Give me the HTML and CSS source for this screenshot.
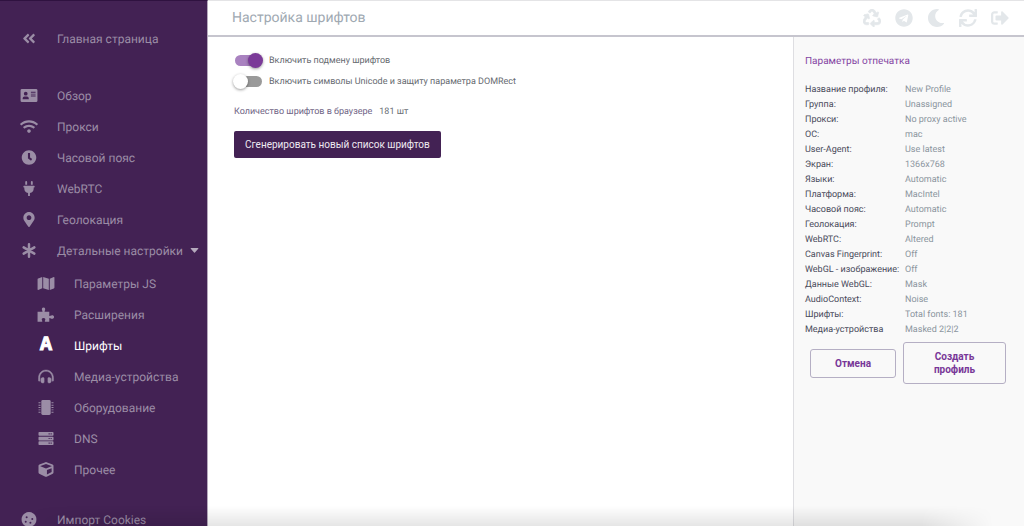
FILE: index.html
```html
<!DOCTYPE html>
<html lang="ru">
<head>
    <meta charset="UTF-8">
    <meta name="viewport" content="width=device-width, initial-scale=1.0">
    <title>Настройка шрифтов</title>
    <link rel="stylesheet" href="styles.css">
</head>
<body>
    <nav class="sidebar">
        <a class="nav-item home" href="#">
            <svg class="icon" viewBox="0 0 448 512"><path d="M223.7 239l136-136c9.4-9.4 24.6-9.4 33.9 0l22.6 22.6c9.4 9.4 9.4 24.6 0 33.9L319.9 256l96.4 96.4c9.4 9.4 9.4 24.6 0 33.9L393.7 409c-9.4 9.4-24.6 9.4-33.9 0l-136-136c-9.5-9.4-9.5-24.6-.1-34zm-192 34l136 136c9.4 9.4 24.6 9.4 33.9 0l22.6-22.6c9.4-9.4 9.4-24.6 0-33.9L127.9 256l96.4-96.4c9.4-9.4 9.4-24.6 0-33.9L201.7 103c-9.4-9.4-24.6-9.4-33.9 0l-136 136c-9.5 9.4-9.5 24.6-.1 34z"/></svg>
            <span>Главная страница</span>
        </a>
        <a class="nav-item" href="#">
            <svg class="icon" viewBox="0 0 576 512"><path fill-rule="evenodd" d="M48 32h480a48 48 0 0 1 48 48v352a48 48 0 0 1-48 48H48a48 48 0 0 1-48-48V80a48 48 0 0 1 48-48zM176 128a64 64 0 1 0 0 128 64 64 0 1 0 0-128zM72 384h208v-28c0-44-30-68-60-68h-88c-30 0-60 24-60 68zM352 128v32h160v-32zM352 192v32h160v-32zM352 256v32h160v-32z"/></svg>
            <span>Обзор</span>
        </a>
        <a class="nav-item" href="#">
            <svg class="icon" viewBox="0 0 640 512"><path d="M634.91 154.88C457.74-8.99 182.19-8.93 5.09 154.88c-6.66 6.16-6.79 16.59-.35 22.98l34.24 33.97c6.14 6.1 16.02 6.23 22.4.38 145.92-133.68 371.3-133.71 517.25 0 6.38 5.85 16.26 5.71 22.4-.38l34.24-33.97c6.43-6.39 6.3-16.82-.36-22.98zM320 352c-35.35 0-64 28.65-64 64s28.65 64 64 64 64-28.65 64-64-28.65-64-64-64zm202.67-83.59c-115.26-101.93-290.21-101.82-405.34 0-6.9 6.1-7.12 16.69-.57 23.15l34.44 33.99c6 5.92 15.66 6.32 22.05.8 83.95-72.57 209.74-72.41 293.49 0 6.39 5.52 16.05 5.13 22.05-.8l34.44-33.99c6.56-6.46 6.33-17.06-.56-23.15z"/></svg>
            <span>Прокси</span>
        </a>
        <a class="nav-item" href="#">
            <svg class="icon" viewBox="0 0 512 512"><path d="M256 8C119 8 8 119 8 256s111 248 248 248 248-111 248-248S393 8 256 8zm57.1 350.1L224.9 294c-3.1-2.3-4.9-5.9-4.9-9.7V116c0-6.6 5.4-12 12-12h48c6.6 0 12 5.4 12 12v137.7l63.5 46.2c5.4 3.9 6.5 11.4 2.6 16.8l-28.2 38.8c-3.9 5.3-11.4 6.5-16.8 2.6z"/></svg>
            <span>Часовой пояс</span>
        </a>
        <a class="nav-item" href="#">
            <svg class="icon" viewBox="0 0 384 512"><path d="M320,32a32,32,0,0,0-64,0v96h64Zm48,128H16A16,16,0,0,0,0,176v32a16,16,0,0,0,16,16H32v32A160.07,160.07,0,0,0,160,412.8V512h64V412.8A160.07,160.07,0,0,0,352,256V224h16a16,16,0,0,0,16-16V176A16,16,0,0,0,368,160ZM128,32a32,32,0,0,0-64,0v96h64Z"/></svg>
            <span>WebRTC</span>
        </a>
        <a class="nav-item" href="#">
            <svg class="icon" viewBox="0 0 384 512"><path d="M172.268 501.67C26.97 291.031 0 269.413 0 192 0 85.961 85.961 0 192 0s192 85.961 192 192c0 77.413-26.97 99.031-172.268 309.67-9.535 13.774-29.93 13.773-39.464 0zM192 272c44.183 0 80-35.817 80-80s-35.817-80-80-80-80 35.817-80 80 35.817 80 80 80z"/></svg>
            <span>Геолокация</span>
        </a>
        <a class="nav-item" href="#">
            <svg class="icon" viewBox="0 0 512 512"><path d="M256 44v424M74 150l364 212M74 362l364-212" fill="none" stroke="currentColor" stroke-width="84" stroke-linecap="round"/></svg>
            <span>Детальные настройки</span>
            <svg class="caret" viewBox="0 0 10 6"><path d="M1 0h8q1 0 .5 1L5.5 5.5q-.5.5-1 0L.5 1Q0 0 1 0z"/></svg>
        </a>
        <div class="submenu">
            <a class="nav-item" href="#">
                <svg class="icon" viewBox="0 0 576 512"><path d="M0 117.66v346.32c0 11.32 11.43 19.06 21.94 14.86L160 416V32L20.12 87.95A32.006 32.006 0 0 0 0 117.66zM192 416l192 64V96L192 32v384zM554.06 33.16L416 96v384l139.88-55.95A31.996 31.996 0 0 0 576 394.34V48.02c0-11.32-11.43-19.06-21.94-14.86z"/></svg>
                <span>Параметры JS</span>
            </a>
            <a class="nav-item" href="#">
                <svg class="icon" viewBox="0 0 576 512"><path d="M0 160h150c20 0 24-14 12-34-30-46-14-110 42-110s72 64 42 110c-12 20-8 34 12 34h142v128c0 22 14 26 36 10 56-36 128-18 128 42s-72 78-128 42c-22-16-36-12-36 10v112H262c-18 0-24-14-12-32 34-50 10-94-46-94s-80 44-46 94c12 18 6 32-12 32H0z"/></svg>
                <span>Расширения</span>
            </a>
            <a class="nav-item active" href="#">
                <span class="icon letter" aria-hidden="true">A</span>
                <span>Шрифты</span>
            </a>
            <a class="nav-item" href="#">
                <svg class="icon" viewBox="0 0 512 512"><path d="M160 288h-16c-35.35 0-64 28.7-64 64.12v63.76c0 35.41 28.65 64.12 64 64.12h16c17.67 0 32-14.36 32-32.06V320.06c0-17.71-14.33-32.06-32-32.06zm208 0h-16c-17.67 0-32 14.35-32 32.06v127.88c0 17.7 14.33 32.06 32 32.06h16c35.35 0 64-28.71 64-64.12v-63.76c0-35.41-28.65-64.12-64-64.12zM256 32C112.91 32 4.57 151.13 0 288v112c0 8.84 7.16 16 16 16h16c8.84 0 16-7.16 16-16V288c0-114.67 93.33-207.8 208-207.82 114.67.02 208 93.15 208 207.82v112c0 8.84 7.16 16 16 16h16c8.84 0 16-7.16 16-16V288C507.43 151.13 399.09 32 256 32z" stroke="currentColor" stroke-width="14"/></svg>
                <span>Медиа-устройства</span>
            </a>
            <a class="nav-item" href="#">
                <svg class="icon" viewBox="0 0 512 512"><rect x="96" width="320" height="512" rx="48"/><path d="M0 80h70v32H0zM0 160h70v32H0zM0 240h70v32H0zM0 320h70v32H0zM0 400h70v32H0zM442 80h70v32h-70zM442 160h70v32h-70zM442 240h70v32h-70zM442 320h70v32h-70zM442 400h70v32h-70z"/></svg>
                <span>Оборудование</span>
            </a>
            <a class="nav-item" href="#">
                <svg class="icon" viewBox="0 0 512 512"><path fill-rule="evenodd" d="M24 32h464a24 24 0 0 1 24 24v80a24 24 0 0 1-24 24H24a24 24 0 0 1-24-24V56a24 24 0 0 1 24-24zM24 192h464a24 24 0 0 1 24 24v80a24 24 0 0 1-24 24H24a24 24 0 0 1-24-24v-80a24 24 0 0 1 24-24zM24 352h464a24 24 0 0 1 24 24v80a24 24 0 0 1-24 24H24a24 24 0 0 1-24-24v-80a24 24 0 0 1 24-24zM344 76v40h40V76zM412 76v40h40V76zM344 236v40h40v-40zM412 236v40h40v-40zM344 396v40h40v-40zM412 396v40h40v-40z"/></svg>
                <span>DNS</span>
            </a>
            <a class="nav-item" href="#">
                <svg class="icon" viewBox="0 0 512 512"><path d="M239.1 6.3l-208 78c-18.7 7-31.1 25-31.1 45v225.1c0 18.2 10.3 34.8 26.5 42.9l208 104c13.5 6.8 29.4 6.8 42.9 0l208-104c16.3-8.1 26.5-24.8 26.5-42.9V129.3c0-20-12.4-37.9-31.1-44.9l-208-78C262 2.2 250 2.2 239.1 6.3zM256 68.4l192 72v1.1l-192 78-192-78v-1.1l192-72zm32 356V275.5l160-65v133.9l-160 80z"/></svg>
                <span>Прочее</span>
            </a>
        </div>
        <a class="nav-item import" href="#">
            <svg class="icon" viewBox="0 0 512 512"><path fill-rule="evenodd" d="M180 12 Q256-12 332 12L430 66Q480 110 500 180Q516 256 500 332Q480 400 430 446L332 500Q256 520 180 500L82 446Q32 400 12 332Q-6 256 12 180Q32 110 82 66zM176 144a34 34 0 1 0 0 68 34 34 0 1 0 0-68zM144 302a34 34 0 1 0 0 68 34 34 0 1 0 0-68zM304 334a34 34 0 1 0 0 68 34 34 0 1 0 0-68zM368 206a34 34 0 1 0 0 68 34 34 0 1 0 0-68z"/></svg>
            <span>Импорт Cookies</span>
        </a>
    </nav>

    <div class="page">
        <header class="topbar">
            <h1>Настройка шрифтов</h1>
            <div class="actions">
                <button type="button" aria-label="Корзина">
                    <svg viewBox="0 0 512 512"><path stroke="#e3e7ea" stroke-width="20" d="M184.561 261.903c3.232 13.997-12.123 24.635-24.068 17.168l-40.736-25.455-50.867 81.402C55.606 356.273 70.96 384 96.012 384H148c6.627 0 12 5.373 12 12v40c0 6.627-5.373 12-12 12H96.115c-75.334 0-121.302-83.048-81.408-146.88l50.822-81.388-40.725-25.448c-12.081-7.547-8.966-25.961 4.879-29.158l110.237-25.45c8.611-1.988 17.201 3.381 19.189 11.99l25.452 110.237zm98.561-182.915l41.289 66.076-40.74 25.457c-12.051 7.528-9 25.953 4.879 29.158l110.237 25.45c8.672 1.999 17.215-3.438 19.189-11.99l25.45-110.237c3.197-13.844-11.99-24.719-24.068-17.168l-40.687 25.424-41.263-66.082c-37.521-60.033-125.209-60.171-162.816 0l-17.963 28.766c-3.51 5.62-1.8 13.021 3.82 16.533l33.919 21.195c5.62 3.512 13.024 1.803 16.536-3.817l17.961-28.743c12.712-20.341 41.973-19.676 54.257-.022zM497.288 301.12l-27.515-44.065c-3.511-5.623-10.916-7.334-16.538-3.821l-33.861 21.159c-5.62 3.512-7.33 10.915-3.818 16.536l27.564 44.112c13.257 21.211-2.057 48.96-27.136 48.96H320V336.02c0-14.213-17.242-21.383-27.313-11.313l-80 79.981c-6.249 6.248-6.249 16.379 0 22.627l80 79.989C302.689 517.308 320 510.3 320 495.989V448h95.88c75.274 0 121.335-82.997 81.408-146.88z"/></svg>
                </button>
                <button type="button" aria-label="Telegram">
                    <svg viewBox="0 0 496 512"><path d="M248 8C111 8 0 119 0 256s111 248 248 248 248-111 248-248S385 8 248 8zm121.8 169.9l-40.7 191.8c-3 13.6-11.1 16.9-22.4 10.5l-62-45.7-29.9 28.8c-3.3 3.3-6.1 6.1-12.5 6.1l4.4-63.1 114.9-103.8c5-4.4-1.1-6.9-7.7-2.5l-142 89.4-61.2-19.1c-13.3-4.2-13.6-13.3 2.8-19.7l239.1-92.2c11.1-4 20.8 2.7 17.2 19.5z"/></svg>
                </button>
                <button type="button" aria-label="Тёмная тема">
                    <svg viewBox="0 0 512 512"><path d="M283.211 512c78.962 0 151.079-35.925 198.857-94.792 7.068-8.708-.639-21.43-11.562-19.35-124.203 23.654-238.262-71.576-238.262-196.954 0-72.222 38.662-138.635 101.498-174.394 9.686-5.512 7.25-20.197-3.756-22.23A258.156 258.156 0 0 0 283.211 0c-141.309 0-256 114.511-256 256 0 141.309 114.511 256 256 256z"/></svg>
                </button>
                <button type="button" aria-label="Обновить">
                    <svg viewBox="0 0 512 512"><path d="M440.65 12.57l4 82.77A247.16 247.16 0 0 0 255.83 8C134.73 8 33.91 94.92 12.29 209.82A12 12 0 0 0 24.09 224h49.05a12 12 0 0 0 11.67-9.26 175.91 175.91 0 0 1 317-56.94l-101.46-4.86a12 12 0 0 0-12.57 12v47.41a12 12 0 0 0 12 12H500a12 12 0 0 0 12-12V12a12 12 0 0 0-12-12h-47.37a12 12 0 0 0-11.98 12.57zM255.83 432a175.61 175.61 0 0 1-146-77.8l101.8 4.87a12 12 0 0 0 12.57-12v-47.4a12 12 0 0 0-12-12H12a12 12 0 0 0-12 12V500a12 12 0 0 0 12 12h47.35a12 12 0 0 0 12-12.6l-4.15-82.57A247.17 247.17 0 0 0 255.83 504c121.11 0 221.93-86.92 243.55-201.82a12 12 0 0 0-11.8-14.18h-49.05a12 12 0 0 0-11.67 9.26A175.86 175.86 0 0 1 255.83 432z"/></svg>
                </button>
                <button type="button" aria-label="Выход">
                    <svg viewBox="0 0 512 512"><path d="M497 273L329 441c-15 15-41 4.5-41-17v-96H152c-13.3 0-24-10.7-24-24v-96c0-13.3 10.7-24 24-24h136V88c0-21.4 25.9-32 41-17l168 168c9.3 9.4 9.3 24.6 0 34zM192 436v-40c0-6.6-5.4-12-12-12H96c-17.7 0-32-14.3-32-32V160c0-17.7 14.3-32 32-32h84c6.6 0 12-5.4 12-12V76c0-6.6-5.4-12-12-12H96c-53 0-96 43-96 96v192c0 53 43 96 96 96h84c6.6 0 12-5.4 12-12z"/></svg>
                </button>
            </div>
        </header>

        <div class="content">
            <main class="settings">
                <label class="switch">
                    <input type="checkbox" checked>
                    <span>Включить подмену шрифтов</span>
                </label>
                <label class="switch">
                    <input type="checkbox">
                    <span>Включить символы Unicode и защиту параметра DOMRect</span>
                </label>
                <p class="count"><span>Количество шрифтов в браузере</span><span class="value">181 шт</span></p>
                <button class="generate" type="button">Сгенерировать новый список шрифтов</button>
            </main>

            <aside class="summary">
                <h2>Параметры отпечатка</h2>
                <table>
                    <tr><th scope="row">Название профиля:</th><td>New Profile</td></tr>
                    <tr><th scope="row">Группа:</th><td>Unassigned</td></tr>
                    <tr><th scope="row">Прокси:</th><td>No proxy active</td></tr>
                    <tr><th scope="row">ОС:</th><td>mac</td></tr>
                    <tr><th scope="row">User-Agent:</th><td>Use latest</td></tr>
                    <tr><th scope="row">Экран:</th><td>1366x768</td></tr>
                    <tr><th scope="row">Языки:</th><td>Automatic</td></tr>
                    <tr><th scope="row">Платформа:</th><td>MacIntel</td></tr>
                    <tr><th scope="row">Часовой пояс:</th><td>Automatic</td></tr>
                    <tr><th scope="row">Геолокация:</th><td>Prompt</td></tr>
                    <tr><th scope="row">WebRTC:</th><td>Altered</td></tr>
                    <tr><th scope="row">Canvas Fingerprint:</th><td>Off</td></tr>
                    <tr><th scope="row">WebGL - изображение:</th><td>Off</td></tr>
                    <tr><th scope="row">Данные WebGL:</th><td>Mask</td></tr>
                    <tr><th scope="row">AudioContext:</th><td>Noise</td></tr>
                    <tr><th scope="row">Шрифты:</th><td>Total fonts: 181</td></tr>
                    <tr><th scope="row">Медиа-устройства</th><td>Masked 2|2|2</td></tr>
                </table>
                <div class="buttons">
                    <button type="button">Отмена</button>
                    <button class="create" type="button">Создать профиль</button>
                </div>
            </aside>
        </div>
    </div>
</body>
</html>
```
FILE: styles.css
```css
* {
    box-sizing: border-box;
}

body {
    margin: 0;
    height: 100vh;
    display: flex;
    overflow: hidden;
    background: #fff;
    font-family: Roboto, "Liberation Sans", sans-serif;
    text-rendering: geometricPrecision;
}

button {
    font-family: inherit;
    cursor: pointer;
}

/* sidebar */
.sidebar {
    flex: 0 0 208px;
    overflow: hidden;
    padding-top: 22px;
    background: #432254;
    border-top: 1px solid #2f1240;
    border-right: 1px solid #b5a9bc;
}

.nav-item {
    display: flex;
    align-items: center;
    height: 31px;
    padding-left: 20px;
    color: #9b8da6;
    font-size: 12px;
    text-decoration: none;
    white-space: nowrap;
}

.nav-item .icon {
    flex: none;
    width: 18px;
    height: 15px;
    margin-right: 19px;
    fill: currentColor;
}

.nav-item.home {
    margin-bottom: 26px;
}

.caret {
    width: 9px;
    height: 5px;
    margin-left: 7px;
    fill: #b5aabd;
}

.submenu {
    padding: 2px 0;
}

.submenu .nav-item {
    padding-left: 37px;
}

.nav-item.active {
    color: #fff;
}

.nav-item .letter {
    font: bold 20px/15px "Liberation Mono", monospace;
    text-align: center;
    -webkit-text-stroke: 1px currentColor;
}

.nav-item.import {
    margin-top: 17px;
}

/* header */
.page {
    flex: 1;
    min-width: 0;
    display: flex;
    flex-direction: column;
    border-top: 1px solid #e4e4e6;
}

.topbar {
    display: flex;
    align-items: center;
    justify-content: space-between;
    height: 36px;
    padding: 0 15px 0 24px;
    border-bottom: 2px solid #c6c5ce;
}

.topbar h1 {
    margin: 0;
    color: #a0a9b2;
    font-size: 14px;
    font-weight: 400;
}

.actions {
    display: flex;
    gap: 14px;
}

.actions button {
    display: flex;
    padding: 0;
    border: 0;
    background: none;
}

.actions svg {
    width: 18px;
    height: 18px;
    fill: #e3e7ea;
}

/* settings */
.content {
    flex: 1;
    min-height: 0;
    display: flex;
}

.settings {
    flex: 1;
    min-width: 0;
    padding: 13px 26px;
    color: #666a70;
    font-size: 9px;
}

.switch {
    display: flex;
    align-items: center;
    height: 21px;
    gap: 6px;
}

.switch input {
    appearance: none;
    position: relative;
    width: 27px;
    height: 11px;
    margin: 0 1px;
    border-radius: 6px;
    background: #9a9a9a;
}

.switch input::before {
    content: '';
    position: absolute;
    top: -2px;
    left: -2px;
    width: 15px;
    height: 15px;
    border-radius: 50%;
    background: #fff;
    box-shadow: 0 1px 3px rgba(0, 0, 0, 0.4);
}

.switch input:checked {
    background: #a982c0;
}

.switch input:checked::before {
    left: 13px;
    background: #7b3a98;
}

.count {
    display: flex;
    gap: 7px;
    margin: 15px 0 14px;
    line-height: 10px;
    color: #6f6485;
}

.count .value {
    color: #6b6f75;
}

.generate {
    padding: 0 11px;
    height: 27px;
    border: 0;
    border-radius: 2px;
    background: #432254;
    color: #eee9f1;
    font-size: 10px;
}

/* profile summary */
.summary {
    flex: 0 0 231px;
    padding: 18px 18px 0 11px;
    background: #f9f9f9;
    border-left: 1px solid #dedee2;
}

.summary h2 {
    margin: 0 0 14px;
    color: #8445a3;
    font-size: 10px;
    font-weight: 400;
    line-height: 14px;
}

.summary table {
    border-collapse: collapse;
    font-size: 9px;
    line-height: 15px;
    white-space: nowrap;
}

.summary th {
    width: 100px;
    padding: 0;
    color: #494b5b;
    font-weight: 400;
    text-align: left;
}

.summary td {
    padding: 0;
    color: #8b959e;
}

.buttons {
    display: flex;
    align-items: center;
    gap: 7px;
    margin-top: 4px;
    padding-left: 5px;
}

.buttons button {
    flex: 0 0 86px;
    height: 29px;
    padding: 0 24px;
    border: 1px solid #b5afc4;
    border-radius: 3px;
    background: none;
    color: #783798;
    font-size: 10px;
    font-weight: 700;
    line-height: 13px;
}

.buttons .create {
    flex-basis: 103px;
    height: 42px;
}

/* shade along the bottom edge of the window */
body::after {
    content: '';
    position: fixed;
    right: 0;
    bottom: 0;
    left: 0;
    height: 20px;
    background: linear-gradient(to top, rgba(0, 0, 0, 0.1), transparent);
    mask-image: linear-gradient(to left, transparent 3%, #000 10%, #000 90%, transparent 97%);
    pointer-events: none;
}
```
